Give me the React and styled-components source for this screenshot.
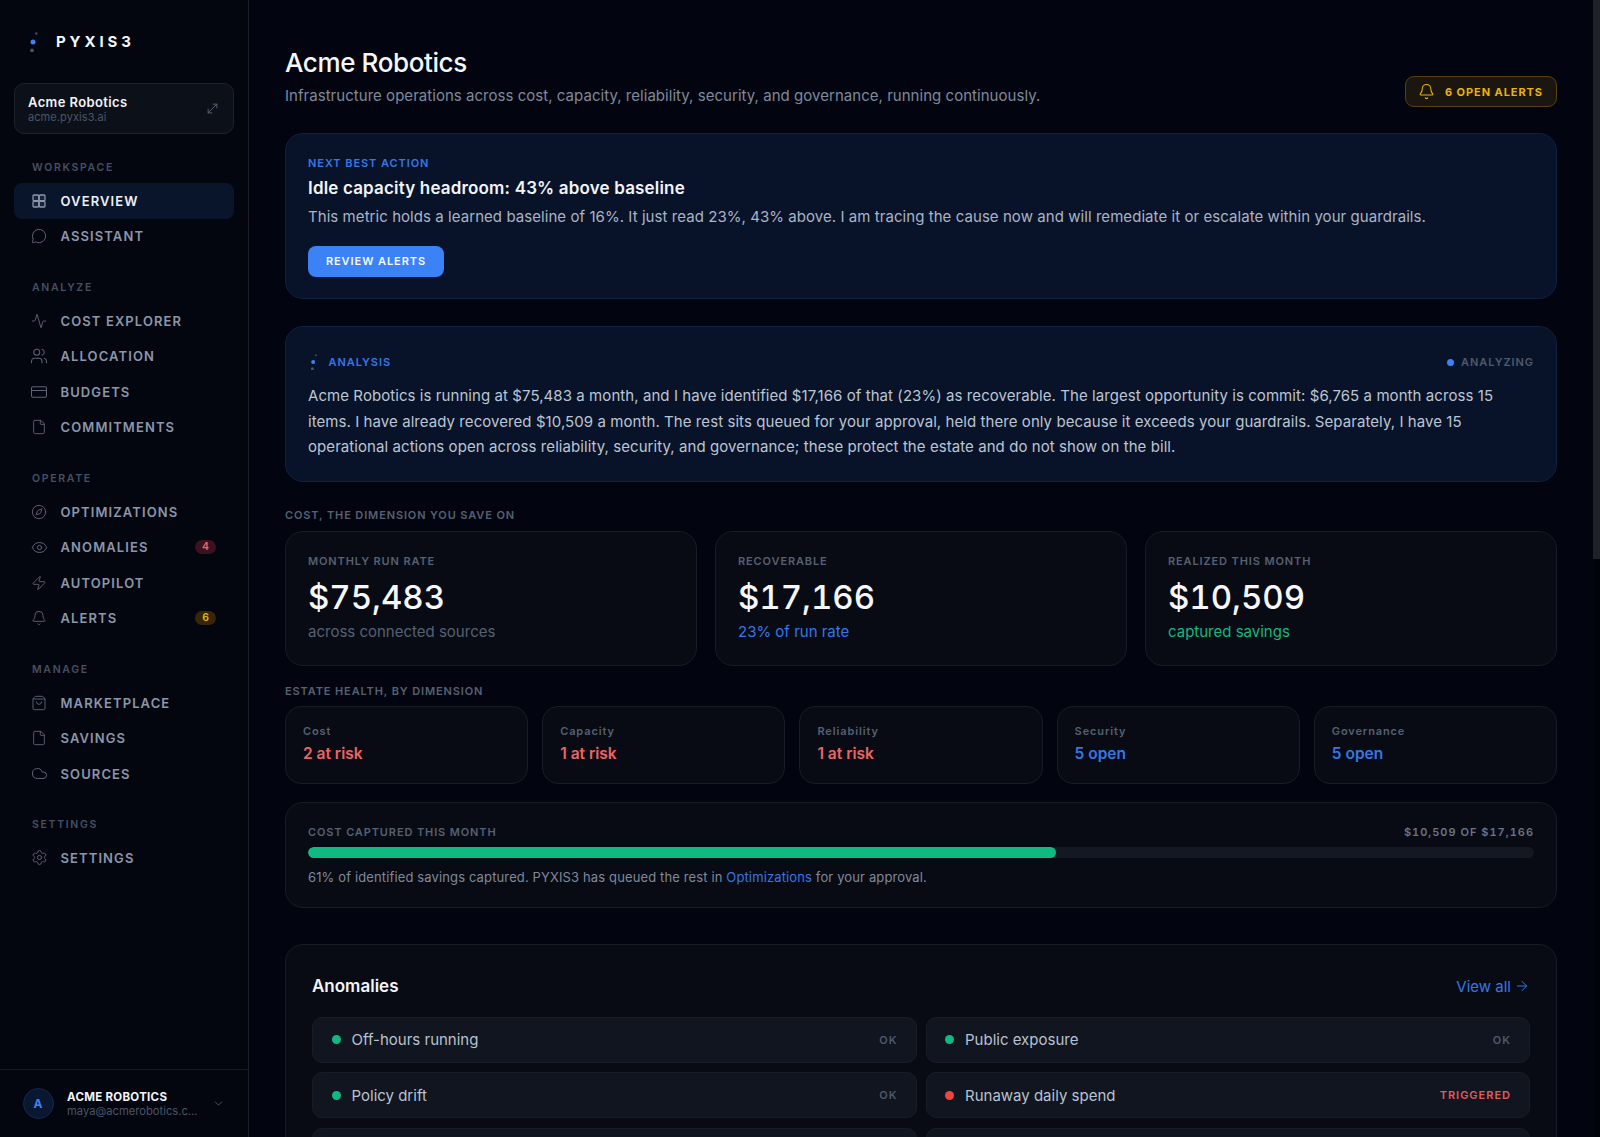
import React from 'react'
import styled, { createGlobalStyle } from 'styled-components'
import {
  Activity, ArrowRight, Bell, ChevronDown, CreditCard, Cloud, Compass, Eye, File,
  MessageCircle, MoveDiagonal, Settings, ShoppingBag, Users, Zap,
} from 'lucide-react'

const FONT = `Inter, "Liberation Sans", sans-serif`

const GlobalStyle = createGlobalStyle`
  html, body { margin: 0; padding: 0; height: 100%; background: #02050f; }
  body { font-family: ${FONT}; color: #fff; }
  * { box-sizing: border-box; }
`

const OverviewIcon = ({ size }) => (
  <svg width={size} height={size} viewBox="0 0 24 24" fill="rgba(140,150,170,0.12)" stroke="currentColor" strokeWidth="1.9" strokeLinejoin="round">
    <rect x="3" y="3" width="8.6" height="8.6" rx="1.4" />
    <rect x="12.4" y="3" width="8.6" height="8.6" rx="1.4" />
    <rect x="3" y="12.4" width="8.6" height="8.6" rx="1.4" />
    <rect x="12.4" y="12.4" width="8.6" height="8.6" rx="1.4" />
  </svg>
)

const NAV = [
  { title: 'Workspace', items: [
    { label: 'Overview', icon: OverviewIcon, size: 16, active: true },
    { label: 'Assistant', icon: MessageCircle, size: 16 },
  ] },
  { title: 'Analyze', items: [
    { label: 'Cost Explorer', icon: Activity, size: 16 },
    { label: 'Allocation', icon: Users, size: 18 },
    { label: 'Budgets', icon: CreditCard, size: 18 },
    { label: 'Commitments', icon: File, size: 16 },
  ] },
  { title: 'Operate', items: [
    { label: 'Optimizations', icon: Compass, size: 16 },
    { label: 'Anomalies', icon: Eye, size: 17 },
    { label: 'Autopilot', icon: Zap, size: 16 },
    { label: 'Alerts', icon: Bell, size: 16 },
  ] },
  { title: 'Manage', items: [
    { label: 'Marketplace', icon: ShoppingBag, size: 16 },
    { label: 'Savings', icon: File, size: 16 },
    { label: 'Sources', icon: Cloud, size: 17 },
  ] },
  { title: 'Settings', items: [
    { label: 'Settings', icon: Settings, size: 17 },
  ] },
]

const BADGES = { Anomalies: { count: '4', tone: 'red' }, Alerts: { count: '6', tone: 'amber' } }

const STATS = [
  { label: 'Monthly run rate', value: '$75,483', sub: 'across connected sources', tone: 'muted' },
  { label: 'Recoverable', value: '$17,166', sub: '23% of run rate', tone: 'blue' },
  { label: 'Realized this month', value: '$10,509', sub: 'captured savings', tone: 'green' },
]

const HEALTH = [
  { label: 'Cost', value: '2 at risk', tone: 'red' },
  { label: 'Capacity', value: '1 at risk', tone: 'red' },
  { label: 'Reliability', value: '1 at risk', tone: 'red' },
  { label: 'Security', value: '5 open', tone: 'blue' },
  { label: 'Governance', value: '5 open', tone: 'blue' },
]

const ANOMALIES = [
  { label: 'Off-hours running', status: 'OK' },
  { label: 'Public exposure', status: 'OK' },
  { label: 'Policy drift', status: 'OK' },
  { label: 'Runaway daily spend', status: 'Triggered', hot: true },
  { label: 'Idle capacity', status: 'OK' },
  { label: 'Stale credentials', status: 'OK' },
]

const TONES = { muted: '#566072', blue: '#3577e6', green: '#10b981', red: '#ee6464' }

const LogoMark = ({ size = 20 }) => (
  <svg width={size} height={size} viewBox="0 0 20 20">
    <circle cx="12.3" cy="1.5" r="1.2" fill="#475063" />
    <circle cx="9" cy="10" r="2.5" fill="#3b82f6" />
    <circle cx="8" cy="18.5" r="1.9" fill="#475063" />
  </svg>
)

export default function App() {
  return (
    <Shell>
      <GlobalStyle />
      <Sidebar>
        <Brand>
          <LogoMark />
          <BrandName>PYXIS3</BrandName>
        </Brand>
        <OrgCard>
          <div>
            <OrgName>Acme Robotics</OrgName>
            <OrgDomain>acme.pyxis3.ai</OrgDomain>
          </div>
          <MoveDiagonal size={15} strokeWidth={1.5} color="#5b6475" />
        </OrgCard>
        <Nav>
          {NAV.map(group => (
            <NavGroup key={group.title}>
              <NavTitle>{group.title}</NavTitle>
              {group.items.map(item => (
                <NavItem key={item.label} $active={item.active}>
                  <NavIcon $active={item.active}>
                    <item.icon size={item.size} strokeWidth={1.4} />
                  </NavIcon>
                  <NavLabel>{item.label}</NavLabel>
                  {BADGES[item.label] && (
                    <NavBadge $tone={BADGES[item.label].tone}>{BADGES[item.label].count}</NavBadge>
                  )}
                </NavItem>
              ))}
            </NavGroup>
          ))}
        </Nav>
        <UserBar>
          <Avatar>A</Avatar>
          <UserText>
            <UserName>Acme Robotics</UserName>
            <UserMail>maya@acmerobotics.com</UserMail>
          </UserText>
          <ChevronDown size={13} strokeWidth={1.5} color="#5b6475" />
        </UserBar>
      </Sidebar>

      <Main>
        <PageHead>
          <div>
            <PageTitle>Acme Robotics</PageTitle>
            <PageSub>Infrastructure operations across cost, capacity, reliability, security, and governance, running continuously.</PageSub>
          </div>
          <AlertPill>
            <Bell size={17} strokeWidth={1.5} />
            6 open alerts
          </AlertPill>
        </PageHead>

        <BlueCard>
          <Eyebrow>Next best action</Eyebrow>
          <ActionTitle>Idle capacity headroom: 43% above baseline</ActionTitle>
          <ActionBody>This metric holds a learned baseline of 16%. It just read 23%, 43% above. I am tracing the cause now and will remediate it or escalate within your guardrails.</ActionBody>
          <PrimaryButton>Review alerts</PrimaryButton>
        </BlueCard>

        <AnalysisCard>
          <AnalysisHead>
            <AnalysisTag>
              <LogoMark size={16} />
              <Eyebrow>Analysis</Eyebrow>
            </AnalysisTag>
            <Analyzing>Analyzing</Analyzing>
          </AnalysisHead>
          <AnalysisBody>
            Acme Robotics is running at $75,483 a month, and I have identified $17,166 of that (23%) as recoverable. The largest opportunity is commit: $6,765 a month across 15 items. I have already recovered $10,509 a month. The rest sits queued for your approval, held there only because it exceeds your guardrails. Separately, I have 15 operational actions open across reliability, security, and governance; these protect the estate and do not show on the bill.
          </AnalysisBody>
        </AnalysisCard>

        <SectionLabel>Cost, the dimension you save on</SectionLabel>
        <StatGrid>
          {STATS.map(stat => (
            <StatCard key={stat.label}>
              <StatLabel>{stat.label}</StatLabel>
              <StatValue>{stat.value}</StatValue>
              <StatSub $tone={stat.tone}>{stat.sub}</StatSub>
            </StatCard>
          ))}
        </StatGrid>

        <HealthLabel>Estate health, by dimension</HealthLabel>
        <HealthGrid>
          {HEALTH.map(item => (
            <HealthCard key={item.label}>
              <HealthName>{item.label}</HealthName>
              <HealthValue $tone={item.tone}>{item.value}</HealthValue>
            </HealthCard>
          ))}
        </HealthGrid>

        <ProgressCard>
          <ProgressHead>
            <StatLabel>Cost captured this month</StatLabel>
            <ProgressAmount>$10,509 of $17,166</ProgressAmount>
          </ProgressHead>
          <Track><Fill style={{ width: '61%' }} /></Track>
          <ProgressNote>
            61% of identified savings captured. PYXIS3 has queued the rest in <NoteLink>Optimizations</NoteLink> for your approval.
          </ProgressNote>
        </ProgressCard>

        <AnomalyCard>
          <AnomalyHead>
            <AnomalyTitle>Anomalies</AnomalyTitle>
            <ViewAll>View all <ArrowRight size={16} strokeWidth={1.5} /></ViewAll>
          </AnomalyHead>
          <AnomalyGrid>
            {ANOMALIES.map(row => (
              <AnomalyRow key={row.label}>
                <Dot $hot={row.hot} />
                <AnomalyName>{row.label}</AnomalyName>
                <AnomalyStatus $hot={row.hot}>{row.status}</AnomalyStatus>
              </AnomalyRow>
            ))}
          </AnomalyGrid>
        </AnomalyCard>
      </Main>

      <ScrollRail>
        <ScrollThumb />
      </ScrollRail>
    </Shell>
  )
}

const Shell = styled.div`
  display: flex;
  height: 100vh;
  overflow: hidden;
  background: #02050f;
`

const Sidebar = styled.aside`
  flex: 0 0 249px;
  display: flex;
  flex-direction: column;
  height: 100%;
  background: #03060f;
  border-right: 1px solid #1a1e29;
`

const Brand = styled.div`
  display: flex;
  align-items: center;
  gap: 12px;
  height: 83px;
  padding: 0 0 0 24px;
`

const BrandName = styled.div`
  font-size: 15px;
  font-weight: 700;
  letter-spacing: 0.26em;
  color: #f4f6fa;
`

const OrgCard = styled.div`
  display: flex;
  align-items: center;
  justify-content: space-between;
  height: 51px;
  margin: 0 14px;
  padding: 0 13px;
  background: #0c1019;
  border: 1px solid #1c212c;
  border-radius: 10px;
`

const OrgName = styled.div`
  font-size: 13px;
  font-weight: 600;
  line-height: 16px;
  letter-spacing: 0.03em;
  color: #f2f4f8;
`

const OrgDomain = styled.div`
  font-size: 11px;
  line-height: 14px;
  letter-spacing: 0.007em;
  color: #4b5566;
`

const Nav = styled.nav`
  flex: 1;
  padding: 26px 14px 0;
`

const NavGroup = styled.div`
  margin-bottom: 25.6px;
`

const NavTitle = styled.div`
  height: 16px;
  line-height: 16px;
  margin-bottom: 7px;
  padding-left: 18px;
  font-size: 10.5px;
  font-weight: 600;
  letter-spacing: 0.16em;
  text-transform: uppercase;
  color: #465062;
`

const NavItem = styled.div`
  display: flex;
  align-items: center;
  gap: 13.5px;
  height: 35.6px;
  padding: 0 18px 0 17px;
  border-radius: 8px;
  background: ${p => (p.$active ? '#08152b' : 'transparent')};
  color: ${p => (p.$active ? '#eef1f6' : '#8b96aa')};
`

const NavIcon = styled.span`
  flex: none;
  display: flex;
  justify-content: center;
  width: 16px;
  color: ${p => (p.$active ? '#8b96aa' : '#5b6475')};
  svg { flex: none; }
`

const NavLabel = styled.span`
  flex: 1;
  font-size: 13px;
  font-weight: 600;
  letter-spacing: 0.085em;
  text-transform: uppercase;
`

const NavBadge = styled.span`
  width: 21px;
  height: 14px;
  line-height: 14px;
  text-align: center;
  border-radius: 7px;
  font-size: 10.5px;
  font-weight: 600;
  background: ${p => (p.$tone === 'red' ? '#3a1220' : '#36270c')};
  color: ${p => (p.$tone === 'red' ? '#ee6464' : '#eab308')};
`

const UserBar = styled.div`
  display: flex;
  align-items: center;
  height: 68px;
  padding: 0 22px 0 22.5px;
  border-top: 1px solid #141823;
`

const Avatar = styled.div`
  flex: none;
  width: 31px;
  height: 31px;
  line-height: 29px;
  margin-right: 13.5px;
  text-align: center;
  border-radius: 50%;
  font-size: 12px;
  font-weight: 700;
  color: #3b82f6;
  background: #0a1730;
  border: 1px solid #14284e;
`

const UserText = styled.div`
  flex: 1;
  min-width: 0;
  max-width: 131px;
  margin-right: 14px;
`

const UserName = styled.div`
  font-size: 11.5px;
  font-weight: 700;
  line-height: 14px;
  letter-spacing: 0.025em;
  text-transform: uppercase;
  color: #f2f4f8;
`

const UserMail = styled.div`
  font-size: 11.2px;
  line-height: 14px;
  color: #4b5566;
  white-space: nowrap;
  overflow: hidden;
  text-overflow: ellipsis;
`

const Main = styled.main`
  flex: 1;
  min-width: 0;
  height: 100%;
  padding: 46px 36px 40px;
  overflow-y: auto;
  scrollbar-width: none;
`

const ScrollRail = styled.div`
  flex: 0 0 7px;
  background: #01030a;
`

const ScrollThumb = styled.div`
  height: 559px;
  background: #1f2129;
`

const PageHead = styled.header`
  display: flex;
  align-items: flex-end;
  justify-content: space-between;
  margin-bottom: 26px;
`

const PageTitle = styled.h1`
  margin: 0 0 5px;
  font-size: 26px;
  font-weight: 500;
  line-height: 34px;
  letter-spacing: -0.015em;
  color: #f6f7fa;
`

const PageSub = styled.p`
  margin: 0;
  font-size: 15px;
  line-height: 22px;
  letter-spacing: 0.036px;
  color: #7f899b;
`

const AlertPill = styled.div`
  display: flex;
  align-items: center;
  gap: 10px;
  height: 31px;
  padding: 0 13px 0 12px;
  border-radius: 9px;
  background: #1b160f;
  border: 1px solid #5a3f12;
  color: #eab308;
  font-size: 11px;
  font-weight: 700;
  letter-spacing: 0.085em;
  text-transform: uppercase;
`

const BlueCard = styled.section`
  padding: 22px 22px 21.5px;
  margin-bottom: 27px;
  background: #081329;
  border: 1px solid #10213f;
  border-radius: 18px;
`

const Eyebrow = styled.div`
  font-size: 11px;
  font-weight: 600;
  line-height: 14px;
  letter-spacing: 0.085em;
  text-transform: uppercase;
  color: #3577e6;
`

const ActionTitle = styled.h2`
  margin: 6px 0 5px;
  font-size: 17px;
  font-weight: 600;
  line-height: 24px;
  letter-spacing: 0.17px;
  color: #f2f4f8;
`

const ActionBody = styled.p`
  margin: 0 0 16.5px;
  font-size: 15px;
  line-height: 24px;
  letter-spacing: 0.06px;
  color: #aab4c4;
`

const PrimaryButton = styled.button`
  display: block;
  width: 136px;
  height: 31px;
  padding: 0;
  border: none;
  border-radius: 8px;
  background: #3b82f6;
  color: #f6f9ff;
  font-family: inherit;
  font-size: 11px;
  font-weight: 600;
  letter-spacing: 0.085em;
  text-transform: uppercase;
`

const AnalysisCard = styled(BlueCard)`
  padding: 27px 22px 22px;
  margin-bottom: 25.4px;
`

const AnalysisHead = styled.div`
  display: flex;
  align-items: center;
  justify-content: space-between;
  margin-bottom: 13.4px;
`

const AnalysisTag = styled.div`
  display: flex;
  align-items: center;
  gap: 7px;
  margin-left: -2.5px;
`

const Analyzing = styled.div`
  display: flex;
  align-items: center;
  gap: 7px;
  font-size: 11px;
  font-weight: 600;
  line-height: 14px;
  letter-spacing: 0.085em;
  text-transform: uppercase;
  color: #4f596c;
  &::before {
    content: '';
    width: 7px;
    height: 7px;
    border-radius: 50%;
    background: #3b82f6;
  }
`

const AnalysisBody = styled.p`
  margin: 0;
  font-size: 15px;
  line-height: 25.2px;
  letter-spacing: 0.07px;
  color: #bcc5d3;
`

const SectionLabel = styled.div`
  height: 16px;
  line-height: 16px;
  margin-bottom: 8px;
  font-size: 11px;
  font-weight: 600;
  letter-spacing: 0.08em;
  text-transform: uppercase;
  color: #566072;
`

const HealthLabel = styled(SectionLabel)`
  margin-top: 16.6px;
  margin-bottom: 7px;
`

const StatGrid = styled.div`
  display: grid;
  grid-template-columns: repeat(3, 1fr);
  gap: 18px;
`

const Card = styled.div`
  background: #080b14;
  border: 1px solid #181c27;
`

const StatCard = styled(Card)`
  height: 135px;
  padding: 21px 22px 0;
  border-radius: 18px;
`

const StatLabel = styled.div`
  font-size: 11px;
  font-weight: 600;
  line-height: 16px;
  letter-spacing: 0.08em;
  text-transform: uppercase;
  color: #566072;
`

const StatValue = styled.div`
  margin: 6px 0 2px;
  font-size: 33px;
  font-weight: 500;
  line-height: 44px;
  font-variant-numeric: tabular-nums;
  color: #f6f7fa;
`

const StatSub = styled.div`
  font-size: 15px;
  line-height: 22px;
  color: ${p => TONES[p.$tone]};
`

const HealthGrid = styled.div`
  display: grid;
  grid-template-columns: repeat(5, 1fr);
  gap: 14px;
  margin-bottom: 18.4px;
`

const HealthCard = styled(Card)`
  height: 78px;
  padding: 16px 17px 0;
  border-radius: 16px;
`

const HealthName = styled.div`
  font-size: 11px;
  font-weight: 600;
  line-height: 16px;
  letter-spacing: 0.08em;
  color: #566072;
`

const HealthValue = styled.div`
  margin-top: 4px;
  font-size: 15.5px;
  font-weight: 600;
  line-height: 22px;
  color: ${p => TONES[p.$tone]};
`

const ProgressCard = styled(Card)`
  height: 106px;
  margin-bottom: 36px;
  padding: 21px 22px 0;
  border-radius: 18px;
`

const ProgressHead = styled.div`
  display: flex;
  justify-content: space-between;
`

const ProgressAmount = styled.div`
  font-size: 11px;
  font-weight: 600;
  line-height: 16px;
  letter-spacing: 0.09em;
  text-transform: uppercase;
  font-variant-numeric: tabular-nums;
  color: #6a7385;
`

const Track = styled.div`
  height: 11px;
  margin: 7px 0 9px;
  border-radius: 6px;
  background: #141823;
  overflow: hidden;
`

const Fill = styled.div`
  height: 100%;
  border-radius: 6px;
  background: #10b981;
`

const ProgressNote = styled.div`
  font-size: 13px;
  line-height: 20px;
  letter-spacing: 0.01em;
  color: #7f899b;
`

const NoteLink = styled.a`
  color: #3577e6;
`

const AnomalyCard = styled(Card)`
  padding: 27px 26px;
  border-radius: 18px;
`

const AnomalyHead = styled.div`
  display: flex;
  align-items: center;
  justify-content: space-between;
  height: 28px;
  margin-bottom: 16.3px;
`

const AnomalyTitle = styled.h3`
  margin: 0;
  font-size: 17px;
  font-weight: 600;
  color: #f2f4f8;
`

const ViewAll = styled.a`
  display: flex;
  align-items: center;
  gap: 3px;
  font-size: 15px;
  color: #3577e6;
`

const AnomalyGrid = styled.div`
  display: grid;
  grid-template-columns: 1fr 1fr;
  gap: 9.6px 9px;
`

const AnomalyRow = styled.div`
  display: flex;
  align-items: center;
  height: 46px;
  padding: 0 18px 0 18.5px;
  background: #10151f;
  border: 1px solid #171c27;
  border-radius: 10px;
`

const Dot = styled.span`
  flex: none;
  width: 9px;
  height: 9px;
  margin-right: 11px;
  border-radius: 50%;
  background: ${p => (p.$hot ? '#ef4444' : '#10b981')};
`

const AnomalyName = styled.span`
  flex: 1;
  font-size: 15px;
  color: #b9c2d0;
`

const AnomalyStatus = styled.span`
  font-size: 11px;
  font-weight: 600;
  letter-spacing: 0.09em;
  text-transform: uppercase;
  color: ${p => (p.$hot ? '#e25c5c' : '#4f596c')};
`
